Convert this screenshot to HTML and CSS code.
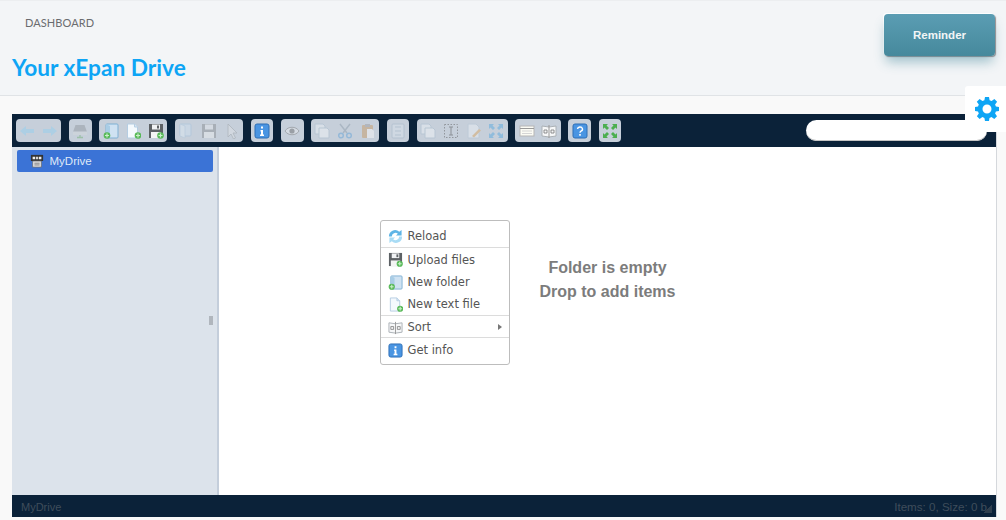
FILE: index.html
```html
<!DOCTYPE html>
<html lang="en">

<head>
    <meta charset="UTF-8">
    <meta name="viewport" content="width=device-width, initial-scale=1.0">
    <title>Your xEpan Drive</title>

    <link rel="stylesheet" href="styles.css">
</head>

<body>

    <svg class="defs" width="0" height="0">
        <defs>
            <g id="i-plus"><circle cx="12" cy="12.500" r="3.300" fill="#58b958" /><path d="M12 10.500v4M10 12.500h4" stroke="#c9efc9" stroke-width="1.200" /></g>
            <symbol id="i-back" viewBox="0 0 16 16"><path d="M1 8l6-5v3h8v4H7v3z" fill="#8fd0f2" /></symbol>
            <symbol id="i-forward" viewBox="0 0 16 16"><path d="M15 8L9 3v3H1v4h8v3z" fill="#8fd0f2" /></symbol>
            <symbol id="i-drive" viewBox="0 0 16 16"><path d="M3.500 2h9l2.500 7v3H1V9z" fill="#8d949b" /><path d="M1 8.500h14V12H1z" fill="#d4d8dc" /><path d="M8 12v3M5 14.500h6" stroke="#6cae6c" stroke-width="1.300" /></symbol>
            <symbol id="i-folder" viewBox="0 0 16 16"><rect x="3" y="1" width="12" height="14" rx="1" fill="#cfe2f2" stroke="#7fb0d3" /><path d="M3 1l4 2v12H3z" fill="#a9cde6" /><use href="#i-plus" x="-8" y="0" /></symbol>
            <symbol id="i-file" viewBox="0 0 16 16"><path d="M2.500 1h7l3 3v11h-10z" fill="#f4f9fd" stroke="#b5cde2" /><path d="M9.500 1v3h3" fill="#d5e5f2" stroke="#b5cde2" /><use href="#i-plus" x="1" y="0" /></symbol>
            <symbol id="i-save" viewBox="0 0 16 16"><path d="M1 1h14v14H1z" fill="#5d6165" /><path d="M4 1.500h8v5H4z" fill="#f0f2f4" /><path d="M9 2.500h2v3H9z" fill="#5d6165" /><path d="M3 9h10v6H3z" fill="#f4f4f4" /><use href="#i-plus" x="0.500" y="0" /></symbol>
            <symbol id="i-open" viewBox="0 0 16 16"><rect x="2" y="1" width="11" height="12" rx="1" fill="#cfe2f2" stroke="#9fc0da" /><path d="M2 1l5 2v12l-5-2z" fill="#dfecf6" stroke="#9fc0da" stroke-width=".6" /></symbol>
            <symbol id="i-disk" viewBox="0 0 16 16"><path d="M1 1h14v14H1z" fill="#85898d" /><path d="M4 1.500h8v5H4z" fill="#e6e9ec" /><path d="M3 9h10v6H3z" fill="#eceef0" /></symbol>
            <symbol id="i-cursor" viewBox="0 0 16 16"><path d="M4 1l9 9H9l2.500 5-2 1-2.500-5-3 3z" fill="#e2e5e8" stroke="#8f959b" stroke-width=".8" /></symbol>
            <symbol id="i-info" viewBox="0 0 16 16"><rect x="1" y="1" width="14" height="14" rx="2" fill="#4a95e2" stroke="#2f6fb5" /><path d="M7 3.500h2v2H7zM6.500 7H9v4.500h1V13H6v-1.500h1V8.500h-.5z" fill="#fff" /></symbol>
            <symbol id="i-help" viewBox="0 0 16 16"><rect x="1" y="1" width="14" height="14" rx="2" fill="#4a95e2" stroke="#2f6fb5" /><path d="M5.500 6a2.500 2.200 0 1 1 3.500 2.200c-.7.400-1 .8-1 1.500" fill="none" stroke="#fff" stroke-width="1.400" /><path d="M7.200 11h1.600v1.800H7.200z" fill="#fff" /></symbol>
            <symbol id="i-eye" viewBox="0 0 16 16"><path d="M1 8c3-5 11-5 14 0-3 5-11 5-14 0z" fill="#e8ebee" stroke="#777" /><circle cx="8" cy="8" r="2.600" fill="#666" /></symbol>
            <symbol id="i-copy" viewBox="0 0 16 16"><path d="M1 1h8l2 2v8H1z" fill="#eef3f8" stroke="#a9bccd" /><path d="M5 5h8l2 2v8H5z" fill="#f8fafc" stroke="#a9bccd" /></symbol>
            <symbol id="i-cut" viewBox="0 0 16 16"><path d="M3 1l7 9M13 1l-7 9" stroke="#8a9aa8" stroke-width="1.500" /><circle cx="4" cy="12.500" r="2.300" fill="none" stroke="#5b9fd6" stroke-width="1.500" /><circle cx="12" cy="12.500" r="2.300" fill="none" stroke="#5b9fd6" stroke-width="1.500" /></symbol>
            <symbol id="i-paste" viewBox="0 0 16 16"><rect x="2" y="2" width="11" height="13" rx="1" fill="#c8975d" /><path d="M5 1h5v3H5z" fill="#9a9a9a" /><path d="M7 6h5l2 2v7H7z" fill="#fbfbfb" /></symbol>
            <symbol id="i-trash" viewBox="0 0 16 16"><rect x="2" y="1" width="12" height="14" rx="1" fill="#dce4ec" stroke="#9fb2c4" /><path d="M5 4h6M5 8h6M5 12h6" stroke="#9fb2c4" /></symbol>
            <symbol id="i-rename" viewBox="0 0 16 16"><path d="M1.500 1.500h13v13h-13z" fill="none" stroke="#555" stroke-dasharray="1.500 1.500" /><path d="M6 4h4M6 12h4M8 4v8" stroke="#444" /></symbol>
            <symbol id="i-edit" viewBox="0 0 16 16"><path d="M2 1h8l3 3v11H2z" fill="#eef3f8" stroke="#b4c5d4" /><path d="M6 13l7-7 2 1.500-7 7z" fill="#e0a860" /></symbol>
            <symbol id="i-resize" viewBox="0 0 16 16"><path d="M1 1h5L4.500 2.500 7 5 5 7 2.500 4.500 1 6zM15 1v5l-1.500-1.500L11 7 9 5l2.500-2.500L10 1zM1 15v-5l1.500 1.500L5 9l2 2-2.500 2.500L6 15zM15 15h-5l1.500-1.500L9 11l2-2 2.500 2.500L15 10z" fill="#4fa6e0" /></symbol>
            <symbol id="i-list" viewBox="0 0 16 16"><rect x="1" y="3" width="14" height="10" fill="#fbfbf4" stroke="#b5b5b5" /><path d="M1 5.500h14" stroke="#999" /><path d="M3 8h10M3 10.500h10" stroke="#d5d5d5" /></symbol>
            <symbol id="i-sort" viewBox="0 0 16 16"><path d="M1 3l7 1 7-1v10l-7 1-7-1z" fill="#f6f7f8" stroke="#aab0b5" /><path d="M8 2v13" stroke="#999" /><path d="M3 7h3v3H3zM10 7h3v3h-3z" fill="none" stroke="#777" stroke-width=".8" /></symbol>
            <symbol id="i-full" viewBox="0 0 16 16"><path d="M1 1h5L4.500 2.500 7 5 5 7 2.500 4.500 1 6zM15 1v5l-1.500-1.500L11 7 9 5l2.500-2.500L10 1zM1 15v-5l1.500 1.500L5 9l2 2-2.500 2.500L6 15zM15 15h-5l1.500-1.500L9 11l2-2 2.500 2.500L15 10z" fill="#4caf50" /></symbol>
            <symbol id="i-reload" viewBox="0 0 16 16"><path d="M1 8a6.500 6.500 0 0 1 11-5L14.500 1v6h-6l2-2A4 4 0 0 0 4 8z" fill="#5fb5e6" /><path d="M15 8a6.500 6.500 0 0 1-11 5L1.500 15V9h6l-2 2A4 4 0 0 0 12 8z" fill="#a9dcf5" /></symbol>
            <symbol id="i-root" viewBox="0 0 16 16"><path d="M1 1h14v7H1z" fill="#333" /><path d="M3 3h3v3H3zM7 3h2v3H7zM10 3h3v3h-3z" fill="#eee" /><path d="M3 8h10v7H3z" fill="#e2e2e2" stroke="#666" stroke-width=".8" /><path d="M5 10.500h6M5 12.500h6" stroke="#777" /></symbol>
        </defs>
    </svg>

    <header class="page-head">
        <div class="crumb">DASHBOARD</div>
        <h1 class="page-title">Your xEpan Drive</h1>
    </header>

    <button class="reminder">Reminder</button>
    <div class="gear-tab">
        <svg class="gear" viewBox="0 0 24 24"><path fill="#0ea5f5" d="M10 0h4l.6 3.300 2 .8L19.400 2l2.700 2.800-2 2.700.8 2 3.100.5v4l-3.100.6-.8 2 1.900 2.700-2.700 2.800-2.800-2-2 .8L14 24h-4l-.6-3.100-2-.8-2.800 2L1.900 19.300l1.900-2.700-.8-2L0 14v-4l3-.5.800-2-2-2.700L4.600 2l2.800 2.100 2-.8zM12 7.500a4.500 4.500 0 1 0 0 9 4.500 4.500 0 0 0 0-9z" /></svg>
    </div>

    <main class="content">
        <section class="finder">
            <div class="toolbar">
                <div class="tool-group">
                    <span class="tool off"><svg><use href="#i-back" /></svg></span>
                    <span class="tool off"><svg><use href="#i-forward" /></svg></span>
                </div>
                <div class="tool-group">
                    <span class="tool off"><svg><use href="#i-drive" /></svg></span>
                </div>
                <div class="tool-group">
                    <span class="tool"><svg><use href="#i-folder" /></svg></span>
                    <span class="tool"><svg><use href="#i-file" /></svg></span>
                    <span class="tool"><svg><use href="#i-save" /></svg></span>
                </div>
                <div class="tool-group">
                    <span class="tool off"><svg><use href="#i-open" /></svg></span>
                    <span class="tool off"><svg><use href="#i-disk" /></svg></span>
                    <span class="tool off"><svg><use href="#i-cursor" /></svg></span>
                </div>
                <div class="tool-group">
                    <span class="tool"><svg><use href="#i-info" /></svg></span>
                </div>
                <div class="tool-group">
                    <span class="tool off"><svg><use href="#i-eye" /></svg></span>
                </div>
                <div class="tool-group">
                    <span class="tool off"><svg><use href="#i-copy" /></svg></span>
                    <span class="tool off"><svg><use href="#i-cut" /></svg></span>
                    <span class="tool off"><svg><use href="#i-paste" /></svg></span>
                </div>
                <div class="tool-group">
                    <span class="tool off"><svg><use href="#i-trash" /></svg></span>
                </div>
                <div class="tool-group">
                    <span class="tool off"><svg><use href="#i-copy" /></svg></span>
                    <span class="tool off"><svg><use href="#i-rename" /></svg></span>
                    <span class="tool off"><svg><use href="#i-edit" /></svg></span>
                    <span class="tool off"><svg><use href="#i-resize" /></svg></span>
                </div>
                <div class="tool-group">
                    <span class="tool"><svg><use href="#i-list" /></svg></span>
                    <span class="tool"><svg><use href="#i-sort" /></svg></span>
                </div>
                <div class="tool-group">
                    <span class="tool"><svg><use href="#i-help" /></svg></span>
                </div>
                <div class="tool-group">
                    <span class="tool"><svg><use href="#i-full" /></svg></span>
                </div>
                <input class="search" type="text">
            </div>

            <div class="workzone">
                <nav class="tree">
                    <div class="tree-root">
                        <svg class="tree-icon"><use href="#i-root" /></svg>
                        MyDrive
                    </div>
                    <span class="tree-handle"></span>
                </nav>
                <div class="cwd">
                    <p class="empty">Folder is empty<br>Drop to add items</p>

                    <ul class="context-menu">
                        <li class="menu-item split"><svg><use href="#i-reload" /></svg>Reload</li>
                        <li class="menu-item"><svg><use href="#i-save" /></svg>Upload files</li>
                        <li class="menu-item"><svg><use href="#i-folder" /></svg>New folder</li>
                        <li class="menu-item split"><svg><use href="#i-file" /></svg>New text file</li>
                        <li class="menu-item split"><svg><use href="#i-sort" /></svg>Sort<span class="arrow"></span></li>
                        <li class="menu-item"><svg><use href="#i-info" /></svg>Get info</li>
                    </ul>
                </div>
            </div>

            <footer class="statusbar">
                <span class="status-left">MyDrive</span>
                <span class="status-right">Items: 0, Size: 0 b</span>
                <span class="grip"></span>
            </footer>
        </section>
    </main>

</body>

</html>
```

FILE: styles.css
```css
* {
    box-sizing: border-box;
}

html,
body {
    height: 100%;
    margin: 0;
    overflow: hidden;
}

body {
    position: relative;
    display: flex;
    flex-direction: column;
    background: #f9f9f9;
    font-family: 'Lato', sans-serif;
}

.defs {
    position: absolute;
}

/* header */
.page-head {
    height: 96px;
    padding: 16px 12px 0;
    background: #f3f5f7;
    border-top: 1px solid #eceef0;
    border-bottom: 1px solid #e0e3e6;
}

.crumb {
    padding-left: 13px;
    font-size: 11px;
    line-height: 11px;
    letter-spacing: 0.1px;
    color: #6a6c6f;
}

.page-title {
    margin: 26px 0 0;
    font-size: 22.700px;
    line-height: 28px;
    font-weight: 700;
    color: #0ea5f5;
}

.reminder {
    position: absolute;
    top: 14px;
    left: 884px;
    width: 111px;
    height: 42px;
    padding: 0 0 1px;
    border: 0;
    border-radius: 4px;
    background: linear-gradient(#5b9db3, #46899c);
    box-shadow: 0 8px 12px -2px rgba(60, 130, 150, 0.45), 1px 1px 1px #9a8f8f, -1px -1px 0 #fff;
    color: #f2f5f6;
    font-family: 'Liberation Sans', sans-serif;
    font-size: 11.500px;
    font-weight: 700;
}

.gear-tab {
    position: absolute;
    top: 86px;
    left: 965px;
    width: 41px;
    height: 46px;
    display: flex;
    align-items: center;
    justify-content: center;
    background: #fff;
    border-radius: 3px 0 0 3px;
}

.gear {
    width: 24px;
    height: 24px;
    margin: 0 0 0 3px;
}

/* file manager */
.content {
    flex: 1;
    padding: 18px 9px 3px 12px;
    min-height: 0;
}

.finder {
    height: 100%;
    display: flex;
    flex-direction: column;
    border-right: 1px solid #d5d8dc;
}

.toolbar {
    height: 33px;
    flex: none;
    display: flex;
    align-items: center;
    gap: 7.600px;
    padding: 0 0 0 4px;
    background: #0b2239;
}

.tool-group {
    display: flex;
    height: 23px;
    background: #c6cfda;
    border-radius: 4px;
}

.tool {
    width: 22.700px;
    height: 23px;
    display: flex;
    align-items: center;
    justify-content: center;
}

.tool svg {
    width: 16px;
    height: 16px;
    filter: blur(0.3px);
}

.tool.off svg {
    opacity: 0.45;
}

.search {
    width: 181px;
    height: 21px;
    margin-left: auto;
    margin-right: 9px;
    border: 0;
    border-radius: 11px;
    background: #fff;
    box-shadow: inset 0 -1px 0 #c4c4c4;
}

.workzone {
    flex: 1;
    min-height: 0;
    display: flex;
}

.tree {
    position: relative;
    width: 207px;
    flex: none;
    padding: 3px 4px 0 5px;
    background: #dce3eb;
    border-right: 2px solid #c4cedb;
}

.tree-root {
    display: flex;
    align-items: center;
    height: 22px;
    padding-left: 13px;
    gap: 5.500px;
    background: #3b73d6;
    border-radius: 2px;
    color: #dfe9f8;
    font-family: 'Liberation Sans', sans-serif;
    font-size: 11.500px;
}

.tree-icon {
    width: 14px;
    height: 14px;
    filter: blur(0.3px);
}

.tree-handle {
    position: absolute;
    top: 169px;
    right: 4px;
    width: 4px;
    height: 9px;
    background: #b0b6bd;
}

.cwd {
    position: relative;
    flex: 1;
    background: #fff;
    padding-top: 109px;
}

.empty {
    margin: 0;
    text-align: center;
    font-family: 'Liberation Sans', sans-serif;
    font-size: 16px;
    line-height: 24px;
    font-weight: 700;
    color: #7c7c7c;
}

.context-menu {
    position: absolute;
    top: 73px;
    left: 161px;
    width: 130px;
    margin: 0;
    padding: 4px 0 3px;
    list-style: none;
    background: #fff;
    border: 1px solid #bdbdbd;
    border-radius: 3px;
    font-family: 'DejaVu Sans', sans-serif;
    font-size: 11.500px;
    color: #555;
}

.menu-item {
    position: relative;
    display: flex;
    align-items: center;
    height: 22.700px;
    padding: 1px 0 0 7px;
    gap: 4.500px;
}

.menu-item svg {
    width: 15px;
    height: 15px;
    filter: blur(0.2px);
}

.split {
    border-bottom: 1px solid #dcdcdc;
}

.arrow {
    position: absolute;
    right: 7px;
    top: 8px;
    border-left: 4px solid #777;
    border-top: 3px solid transparent;
    border-bottom: 3px solid transparent;
}

.statusbar {
    position: relative;
    height: 22px;
    flex: none;
    display: flex;
    align-items: center;
    justify-content: space-between;
    padding: 1px 9px 0 9px;
    background: #0b2239;
    color: #3f4d5b;
    font-family: 'Liberation Sans', sans-serif;
}

.status-left {
    font-size: 11px;
}

.status-right {
    font-size: 11.600px;
}

.grip {
    position: absolute;
    right: 4px;
    bottom: 4px;
    width: 8px;
    height: 8px;
    background: linear-gradient(135deg, transparent 50%, #2f3f4e 50%);
}
```
